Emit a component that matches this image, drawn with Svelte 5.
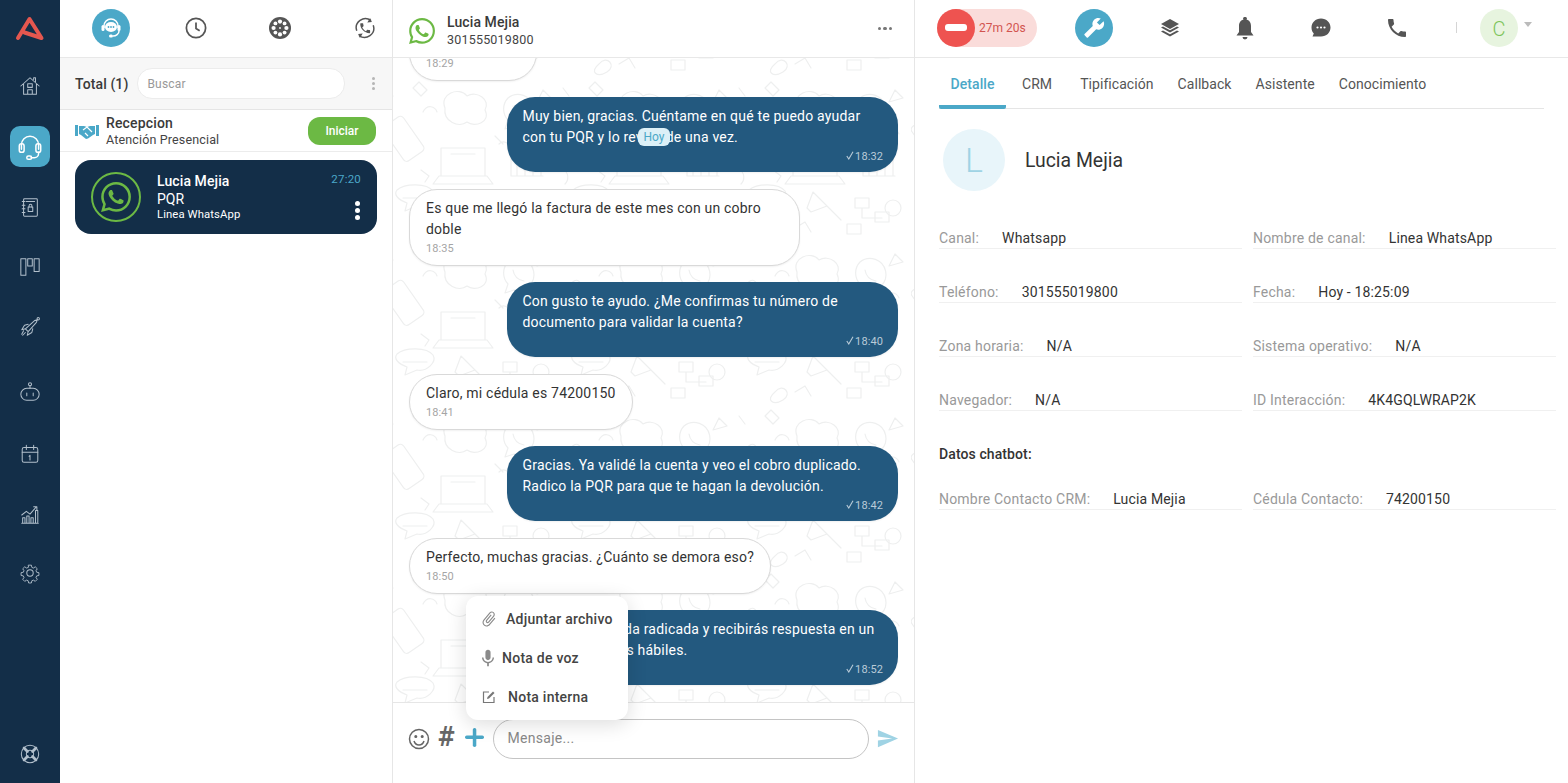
<script>
  const WA = "M17.472 14.382c-.297-.149-1.758-.867-2.03-.967-.273-.099-.471-.148-.67.15-.197.297-.767.966-.94 1.164-.173.199-.347.223-.644.075-.297-.15-1.255-.463-2.39-1.475-.883-.788-1.48-1.761-1.653-2.059-.173-.297-.018-.458.13-.606.134-.133.298-.347.446-.52.149-.174.198-.298.298-.497.099-.198.05-.371-.025-.52-.075-.149-.669-1.612-.916-2.207-.242-.579-.487-.5-.669-.51-.173-.008-.371-.01-.57-.01-.198 0-.52.074-.792.372-.272.297-1.04 1.016-1.04 2.479 0 1.462 1.065 2.875 1.213 3.074.149.198 2.096 3.2 5.077 4.487.709.306 1.262.489 1.694.625.712.227 1.36.195 1.871.118.571-.085 1.758-.719 2.006-1.413.248-.694.248-1.289.173-1.413-.074-.124-.272-.198-.57-.347m-5.421 7.403h-.004a9.87 9.87 0 01-5.031-1.378l-.361-.214-3.741.982.998-3.648-.235-.374a9.86 9.86 0 01-1.51-5.26c.001-5.45 4.436-9.884 9.888-9.884 2.64 0 5.122 1.03 6.988 2.898a9.825 9.825 0 012.893 6.994c-.003 5.45-4.437 9.884-9.885 9.884m8.413-18.297A11.815 11.815 0 0012.05 0C5.495 0 .16 5.335.157 11.892c0 2.096.547 4.142 1.588 5.945L.057 24l6.305-1.654a11.882 11.882 0 005.683 1.448h.005c6.554 0 11.89-5.335 11.893-11.893a11.821 11.821 0 00-3.48-8.413z";
  const messages = [
    { out: false, lines: "Hola, ¿qué tal?", time: "18:29" },
    { out: true, lines: "Muy bien, gracias. Cuéntame en qué te puedo ayudar con tu PQR y lo reviso de una vez.", time: "18:32" },
    { out: false, lines: "Es que me llegó la factura de este mes con un cobro doble", time: "18:35" },
    { out: true, lines: "Con gusto te ayudo. ¿Me confirmas tu número de documento para validar la cuenta?", time: "18:40" },
    { out: false, lines: "Claro, mi cédula es 74200150", time: "18:41" },
    { out: true, lines: "Gracias. Ya validé la cuenta y veo el cobro duplicado. Radico la PQR para que te hagan la devolución.", time: "18:42" },
    { out: false, lines: "Perfecto, muchas gracias. ¿Cuánto se demora eso?", time: "18:50" },
    { out: true, lines: "Tu solicitud queda radicada y recibirás respuesta en un término de 5 días hábiles.", time: "18:52" }
  ];
  const tabs = ["Detalle", "CRM", "Tipificación", "Callback", "Asistente", "Conocimiento"];
  const fields = [
    ["Canal:", "Whatsapp"], ["Nombre de canal:", "Linea WhatsApp"],
    ["Teléfono:", "301555019800"], ["Fecha:", "Hoy - 18:25:09"],
    ["Zona horaria:", "N/A"], ["Sistema operativo:", "N/A"],
    ["Navegador:", "N/A"], ["ID Interacción:", "4K4GQLWRAP2K"]
  ];
  const bot = [["Nombre Contacto CRM:", "Lucia Mejia"], ["Cédula Contacto:", "74200150"]];
</script>

<div class="app">
  <nav class="rail">
    <svg class="logo" width="30" height="26" viewBox="0 0 30 26"><path d="M3 23 14.5 4 26.500 23 9.500 17.500" fill="none" stroke="#e5574f" stroke-width="4" stroke-linejoin="round" stroke-linecap="round"/></svg>
    <div class="rail-items">
      <a class="ri" href="#a"><svg viewBox="0 0 24 24"><path d="M2 12 12 3l10 9M5 10v11h14V10M16 5V3h2v4M9.500 21v-5h5v5M9.500 9.500h5v4h-5z"/></svg></a>
      <a class="ri active" href="#a"><svg viewBox="0 0 28 28" style="width:30px;height:30px"><path d="M6 16v-4a8 8 0 0 1 16 0v4M22 19v1a4 4 0 0 1-4 4h-3"/><rect x="4" y="11" width="4.500" height="8" rx="2"/><rect x="19.500" y="11" width="4.500" height="8" rx="2"/><rect x="11" y="22.500" width="4.500" height="3" rx="1.500"/></svg></a>
      <a class="ri" href="#a"><svg viewBox="0 0 24 24"><rect x="5" y="3" width="15" height="19" rx="1"/><path d="M3.500 6h3M3.500 10h3M3.500 14h3M3.500 18h3M8 6h9"/><rect x="10" y="12" width="5" height="5"/><path d="M11 12v-1.500a1.500 1.500 0 0 1 3 0V12"/></svg></a>
      <a class="ri" href="#a"><svg viewBox="0 0 24 24"><rect x="2" y="3" width="5.500" height="18"/><rect x="9.500" y="3" width="5" height="8"/><rect x="16.500" y="3" width="5.500" height="14"/></svg></a>
      <a class="ri" href="#a"><svg viewBox="0 0 24 24"><path d="M7 14 17 5l3-1-1 3-9 10zM7 14l-4 1 3-5 4-1M10 17l-1 4 5-3 1-4M5 16l-2 4M7 18l-3 3"/><circle cx="21" cy="3" r="1.300"/></svg></a>
      <a class="ri" href="#a"><svg viewBox="0 0 24 24"><rect x="2" y="8" width="20" height="13" rx="6.500"/><path d="M12 8V5M8.500 13v3M15.500 13v3"/><circle cx="12" cy="3.500" r="1.700"/></svg></a>
      <a class="ri" href="#a"><svg viewBox="0 0 24 24"><rect x="3.500" y="5" width="17" height="16" rx="2"/><path d="M3.500 10h17M8 2.500V7M16 2.500V7M11 14.500l1-1v5"/></svg></a>
      <a class="ri" href="#a"><svg viewBox="0 0 24 24"><path d="M3 21h18M4 21v-6h2.500v6M8.500 21v-8H11v8M13 21v-6h2.500v6M18 21V7h2.500v14M3 12l5-4 4 3 7-8M16 3h3.500v3.500"/></svg></a>
      <a class="ri" href="#a"><svg viewBox="0 0 24 24"><circle cx="12" cy="12" r="3.500"/><path d="M10.300 2.500h3.400l.5 2.700 1.900.8 2.300-1.500 2.400 2.400-1.500 2.300.8 1.900 2.700.5v3.400l-2.700.5-.8 1.900 1.500 2.300-2.400 2.400-2.300-1.500-1.900.8-.5 2.700h-3.400l-.5-2.700-1.900-.8-2.300 1.500-2.400-2.400 1.500-2.300-.8-1.900-2.700-.5v-3.400l2.700-.5.8-1.900-1.500-2.300 2.400-2.400 2.300 1.500 1.900-.8z" transform="translate(1.200 1.200) scale(.9)"/></svg></a>
    </div>
    <a class="ri help" href="#a"><svg viewBox="0 0 24 24"><circle cx="12" cy="12" r="9.500"/><circle cx="12" cy="12" r="4"/><path d="m5.500 5.500 3.700 3.700M18.500 5.500l-3.700 3.700M5.500 18.500l3.700-3.700M18.500 18.500l-3.700-3.700" stroke-width="3"/></svg></a>
  </nav>

  <section class="queue">
    <header class="qtabs">
      <span class="circle"><svg width="26" height="26" viewBox="0 0 26 26"><path d="M6 13v-2a7 7 0 0 1 14 0v2" fill="none" stroke="#fff" stroke-width="1.500"/><ellipse cx="13" cy="12" rx="6" ry="5" fill="#fff"/><rect x="3.500" y="10" width="3" height="6" rx="1.500" fill="#fff"/><rect x="19.500" y="10" width="3" height="6" rx="1.500" fill="#fff"/><path d="M21 16c0 3-3 5-6 5" fill="none" stroke="#fff" stroke-width="1.500"/><rect x="11" y="19.500" width="4" height="3" rx="1.500" fill="#fff"/><circle cx="10.500" cy="12" r=".9" fill="#4ba8c8"/><circle cx="13" cy="12" r=".9" fill="#4ba8c8"/><circle cx="15.500" cy="12" r=".9" fill="#4ba8c8"/></svg></span>
      <svg width="22" height="22" viewBox="0 0 24 24" fill="none" stroke="#555" stroke-width="1.900"><circle cx="12" cy="12" r="10.500"/><path d="M12 6v6.500l4 2.500"/></svg>
      <svg width="22" height="22" viewBox="0 0 24 24"><circle cx="12" cy="12" r="12" fill="#555"/><g fill="#fff"><circle cx="12" cy="5" r="2.300"/><circle cx="12" cy="19" r="2.300"/><circle cx="5" cy="12" r="2.300"/><circle cx="19" cy="12" r="2.300"/><circle cx="7" cy="7" r="2.100"/><circle cx="17" cy="7" r="2.100"/><circle cx="7" cy="17" r="2.100"/><circle cx="17" cy="17" r="2.100"/><circle cx="12" cy="12" r="1"/></g></svg>
      <svg width="22" height="22" viewBox="0 0 24 24"><path d="M3 15A10 10 0 0 1 18.500 3.800M21 9A10 10 0 0 1 5.500 20.200" fill="none" stroke="#555" stroke-width="1.600"/><path d="m17.500 1 2 4.500-5 .5zM6.500 23l-2-4.500 5-.5z" fill="#555"/><path transform="translate(5 5) scale(.6)" fill="#555" d="M6.620 10.790c1.440 2.830 3.760 5.140 6.590 6.590l2.200-2.200c.27-.27.67-.36 1.020-.24 1.120.37 2.330.57 3.570.57.55 0 1 .45 1 1V20c0 .55-.45 1-1 1-9.390 0-17-7.610-17-17 0-.55.45-1 1-1h3.500c.55 0 1 .45 1 1 0 1.250.2 2.450.57 3.570.11.35.03.74-.25 1.020l-2.200 2.200z"/></svg>
    </header>
    <div class="search-row">
      <strong>Total (1)</strong>
      <div class="search">Buscar</div>
      <span class="vdots"><i></i><i></i><i></i></span>
    </div>
    <div class="recep">
      <svg width="24" height="16" viewBox="0 0 24 16" fill="#4ba8c8"><path d="M0 2h3v11H0zM21 2h3v11h-3z"/><path d="M4 3h5l3 1 3-1h5v8l-2 1-5 3.500-2 .5-5-4-2-1z"/><path d="m8 7 4-3 5 5M10 10l3 3" fill="none" stroke="#fff" stroke-width="1.200"/></svg>
      <div class="recep-text"><b>Recepcion</b><span>Atención Presencial</span></div>
      <button class="iniciar">Iniciar</button>
    </div>
    <div class="card">
      <span class="ring"><svg width="30" height="30" viewBox="0 0 24 24" fill="#6cb944"><path d={WA}/></svg></span>
      <div class="card-text"><b>Lucia Mejia</b><span class="pqr">PQR</span><small>Linea WhatsApp</small></div>
      <div class="card-side"><span>27:20</span><span class="wdots"><i></i><i></i><i></i></span></div>
    </div>
  </section>

  <section class="chat">
    <header class="chat-head">
      <svg width="26" height="26" viewBox="0 0 24 24" fill="#6cb944"><path d={WA}/></svg>
      <div class="who"><b>Lucia Mejia</b><span>301555019800</span></div>
      <span class="hdots"><i></i><i></i><i></i></span>
    </header>
    <div class="thread">
      <svg class="doodles" width="100%" height="100%" aria-hidden="true">
        <defs>
          <pattern id="wp" width="176" height="164" patternUnits="userSpaceOnUse" x="-10" y="20">
            <g fill="none" stroke="#eeefef" stroke-width="1.200" stroke-linecap="round" stroke-linejoin="round">
              <rect x="8" y="40" width="24" height="42" rx="4" transform="rotate(-35 20 60)"/>
              <path d="M62 30c-6-14 14-22 22-12 10-6 24 4 18 14 6 12-10 18-18 12-8 6-24 0-22-14z"/>
              <path d="M58 70h44v28H58zM50 106h60l-6-8H56zM68 76h24"/>
              <path d="M125 20a16 16 0 1 1 6 28l-9 3 3-9a16 16 0 0 1 0-22zM130 28c1 6 5 10 11 11"/>
              <path d="M128 72v26h32M134 98V86M142 98V78M150 98V84M158 98V74"/>
              <path d="M14 112c8-7 30-7 36 1 4 7-6 17-16 15l-12 5 2-8c-8-3-14-8-10-13zM20 120h24"/>
              <path d="M72 130l6-16 14 14-16 6zM92 128l14 14M40 150c8-10 18 2 8 8s-18 0-8-8M120 120h14v10h-14zM140 134h14v10h-14zM112 146h14v10h-14zM127 130v10h20"/>
              <circle cx="158" cy="130" r="8"/><path d="M30 10l6-6 8 8-6 6zM4 10l6 8M160 12l8 8-14 4z"/>
              <path d="M40 34c4-8 12-6 14 0M38 92l8 6-4 6M112 58l8 8M116 66c4-4 10-2 10 4M4 92c6 2 6 10 2 14M60 150l10-6 6 10M148 54c4-6 14-4 16 2"/>
            </g>
          </pattern>
        </defs>
        <rect width="100%" height="100%" fill="url(#wp)"/>
      </svg>
      <div class="msgs">
        {#each messages as m}
          <div class="bubble" class:out={m.out}>
            <p>{m.lines}</p>
            <time>{#if m.out}<svg width="8" height="9" viewBox="0 0 8 9"><path d="m.8 5 2 3L7 .8" fill="none" stroke="#b9cbd8" stroke-width="1.100"/></svg>{/if}{m.time}</time>
          </div>
        {/each}
      </div>
      <span class="hoy">Hoy</span>
    </div>
    <footer class="composer">
      <svg class="c-smile" width="22" height="22" viewBox="0 0 22 22" fill="none" stroke="#666" stroke-width="1.500"><circle cx="11" cy="11" r="9.500"/><path d="M6 13c1 3 3 4 5 4s4-1 5-4"/><circle cx="7.800" cy="8.500" r=".8" fill="#666"/><circle cx="14.200" cy="8.500" r=".8" fill="#666"/></svg>
      <span class="hash">#</span>
      <svg class="c-plus" width="19" height="19" viewBox="0 0 19 19" fill="#4ba8c8"><rect y="7.500" width="19" height="3.500" rx="1.700"/><rect x="7.800" width="3.500" height="19" rx="1.700"/></svg>
      <div class="input">Mensaje...</div>
      <svg class="send" width="23" height="23" viewBox="0 0 24 24" fill="#9fd3e4"><path d="M2.010 21 23 12 2.010 3 2 10l15 2-15 2z"/></svg>
    </footer>
    <div class="menu">
      <div class="mi"><svg width="18" height="18" viewBox="0 0 24 24" fill="#8a8a8a" transform="rotate(40)"><path d="M16.500 6v11.500c0 2.210-1.790 4-4 4s-4-1.790-4-4V5c0-1.380 1.120-2.500 2.500-2.500s2.500 1.120 2.500 2.500v10.500c0 .55-.45 1-1 1s-1-.45-1-1V6H10v9.500c0 1.380 1.120 2.500 2.500 2.500s2.500-1.120 2.500-2.500V5c0-2.210-1.790-4-4-4S7 2.790 7 5v12.500c0 3.040 2.460 5.500 5.500 5.500s5.500-2.460 5.500-5.500V6h-1.500z"/></svg>Adjuntar archivo</div>
      <div class="mi mic"><svg width="16" height="18" viewBox="4 1 16 21" fill="#8a8a8a"><path d="M12 14c1.660 0 3-1.340 3-3V5c0-1.660-1.340-3-3-3S9 3.340 9 5v6c0 1.660 1.340 3 3 3zm5.300-3c0 3-2.540 5.100-5.300 5.100S6.700 14 6.700 11H5c0 3.410 2.720 6.230 6 6.720V21h2v-3.280c3.280-.48 6-3.300 6-6.720h-1.700z"/></svg>Nota de voz</div>
      <div class="mi note"><svg width="14" height="14" viewBox="0 0 14 14" fill="none" stroke="#777" stroke-width="1.200"><path d="M7 2H1.500v10.500H12V7"/><path d="M5 9l.5-2L11 1.500 12.500 3 7 8.500z" fill="#777" stroke="none"/></svg>Nota interna</div>
    </div>
  </section>

  <section class="detail">
    <header class="top">
      <div class="status"><span class="stop"><i></i></span><span class="timer">27m 20s</span></div>
      <span class="tool"><svg width="24" height="24" viewBox="0 0 24 24" fill="#fff"><g transform="matrix(-.9 0 0 .9 23 1)"><path d="M22.700 19l-9.100-9.100c.9-2.300.4-5-1.500-6.900-2-2-5-2.400-7.400-1.300L9 6 6 9 1.600 4.700C.4 7.100.9 10.100 2.900 12.100c1.900 1.900 4.600 2.400 6.900 1.500l9.100 9.100c.4.4 1 .4 1.400 0l2.300-2.300c.5-.4.5-1.100.1-1.400z"/></g></svg></span>
      <svg class="gap1" width="20" height="20" viewBox="0 0 20 20" fill="#555"><path d="m10 1 9 5-9 5-9-5z"/><path d="m1 9.500 2-1 7 3.800 7-3.800 2 1-9 5z"/><path d="m1 13.500 2-1 7 3.800 7-3.800 2 1-9 5z"/></svg>
      <svg class="gap2" width="18" height="24" viewBox="0 0 18 24" fill="#555"><path d="M9 1a1.500 1.500 0 0 1 1.500 2.500C14 4.500 15 7.500 15 10v6l2.500 3.500H.5L3 16v-6c0-2.500 1-5.500 4.500-6.500A1.500 1.500 0 0 1 9 1zM6.500 21h5a2.500 2.500 0 0 1-5 0z"/></svg>
      <svg class="gap3" width="20" height="20" viewBox="0 0 20 20"><path d="M10 .5c5.500 0 9.500 4 9.500 9s-4 9-9.500 9H1.500l1.300-3C1.300 14 .5 12 .5 9.500c0-5 4-9 9.500-9z" fill="#555"/><circle cx="6.500" cy="9.500" r="1.100" fill="#fff"/><circle cx="10" cy="9.500" r="1.100" fill="#fff"/><circle cx="13.500" cy="9.500" r="1.100" fill="#fff"/></svg>
      <svg class="gap4" width="18" height="18" viewBox="3 3 18 18" fill="#555"><path d="M6.620 10.790c1.440 2.830 3.760 5.140 6.590 6.590l2.200-2.200c.27-.27.67-.36 1.020-.24 1.120.37 2.330.57 3.570.57.55 0 1 .45 1 1V20c0 .55-.45 1-1 1-9.390 0-17-7.610-17-17 0-.55.45-1 1-1h3.500c.55 0 1 .45 1 1 0 1.250.2 2.450.57 3.570.11.35.03.74-.25 1.020l-2.200 2.200z"/></svg>
      <span class="sep"></span>
      <span class="me">C</span>
      <span class="caret"></span>
    </header>
    <div class="body">
      <div class="tabs">
        {#each tabs as t, i}<a href="#a" class:on={i === 0}>{t}</a>{/each}
      </div>
      <div class="contact"><span class="big">L</span><h2>Lucia Mejia</h2></div>
      <div class="grid">
        {#each fields as f}<div class="field"><span>{f[0]}</span><b>{f[1]}</b></div>{/each}
      </div>
      <h3>Datos chatbot:</h3>
      <div class="grid">
        {#each bot as f}<div class="field"><span>{f[0]}</span><b>{f[1]}</b></div>{/each}
      </div>
    </div>
  </section>
</div>

<style>
  :global(body) { margin: 0; background: #fff; }
  * { box-sizing: border-box; }
  .app { display: grid; grid-template-columns: 60px 333px 522px 1fr; height: 783px; overflow: hidden; font-family: Roboto, "Liberation Sans", sans-serif; color: #333; font-size: 14px; }

  .rail { background: #132e48; display: flex; flex-direction: column; align-items: center; }
  .logo { margin-top: 15px; flex: none; }
  .rail-items { margin-top: 25px; display: flex; flex-direction: column; align-items: center; gap: 20px; flex: 1; }
  .ri { width: 40px; height: 40px; display: flex; align-items: center; justify-content: center; border-radius: 10px; flex: none; }
  .ri:nth-child(6) { margin-top: 5px; }
  .ri:nth-child(7) { margin-top: 2px; }
  .ri:nth-child(8) { margin-top: 1px; }
  .ri:nth-child(9) { margin-top: -2px; }
  .ri svg { width: 22px; height: 22px; fill: none; stroke: #b3c0cc; stroke-width: 1.100; stroke-linecap: round; stroke-linejoin: round; }
  .ri.active { background: #4ba8c8; height: 41px; }
  .ri.active svg { stroke: #fff; stroke-width: 1.400; }
  .help { margin-bottom: 9px; }

  .queue { border-right: 1px solid #e6e6e6; display: flex; flex-direction: column; }
  .qtabs { height: 58px; border-bottom: 1px solid #e8e8e8; display: grid; grid-template-columns: repeat(4, 84.500px); align-items: center; justify-items: center; padding: 0 0 2px 9px; flex: none; }
  .circle { width: 38px; height: 38px; border-radius: 50%; background: #4ba8c8; display: flex; align-items: center; justify-content: center; }
  .search-row { height: 52px; background: #f7f7f7; border-bottom: 1px solid #e5e5e5; display: flex; align-items: center; padding: 0 15px; flex: none; }
  .search-row strong { font-weight: 500; font-size: 14px; letter-spacing: .1px; color: #3a3a3a; }
  .search { margin-left: 9px; width: 208px; height: 31px; border-radius: 15px; background: #fff; border: 1px solid #ececec; color: #999; font-size: 12px; line-height: 31px; padding-left: 9px; letter-spacing: .2px; }
  .vdots { display: flex; flex-direction: column; gap: 2px; margin-left: 27px; }
  .vdots i { width: 3px; height: 3px; background: #b5b5b5; border-radius: 50%; }
  .recep { height: 42px; border-bottom: 1px solid #ececec; display: flex; align-items: center; padding: 0 16px 0 15px; flex: none; }
  .recep-text { margin-left: 7px; padding-top: 2px; display: flex; flex-direction: column; flex: 1; }
  .recep-text b { font-weight: 500; font-size: 14px; line-height: 16px; letter-spacing: .15px; color: #3a3a3a; }
  .recep-text span { font-size: 12.500px; line-height: 17px; letter-spacing: .15px; color: #444; }
  .iniciar { width: 68px; height: 28px; border: 0; border-radius: 12px; background: #6cb944; color: #fff; font: 500 12px Roboto, sans-serif; }
  .card { margin: 8px 15px 0; height: 74px; border-radius: 16px; background: #132e48; color: #fff; display: flex; align-items: center; padding: 0 16px; flex: none; }
  .ring { width: 50px; height: 50px; border-radius: 50%; border: 2.500px solid #6cb944; display: flex; align-items: center; justify-content: center; flex: none; }
  .card-text { margin-left: 16px; padding-bottom: 2px; display: flex; flex-direction: column; flex: 1; }
  .card-text b { font-weight: 500; font-size: 14px; line-height: 18px; letter-spacing: .1px; }
  .pqr { font-size: 14px; line-height: 18px; }
  .card-text small { font-size: 11.300px; line-height: 13px; letter-spacing: .1px; }
  .card-side { align-self: stretch; display: flex; flex-direction: column; align-items: flex-end; justify-content: space-between; padding: 12px 0 14px; }
  .card-side span:first-child { color: #4ba8c8; font-size: 11.500px; letter-spacing: .2px; }
  .wdots { display: flex; flex-direction: column; gap: 2px; margin-right: 1px; }
  .wdots i { width: 5px; height: 5px; background: #fff; border-radius: 50%; }

  .chat { position: relative; border-right: 1px solid #e6e6e6; display: flex; flex-direction: column; min-height: 0; }
  .chat-head { height: 58px; border-bottom: 1px solid #e8e8e8; display: flex; align-items: center; padding: 4px 22px 0 16px; flex: none; }
  .who { margin-left: 12px; display: flex; flex-direction: column; flex: 1; }
  .who b { font-weight: 500; font-size: 14px; line-height: 17px; letter-spacing: .1px; color: #3a3a3a; }
  .who span { font-size: 12.500px; line-height: 17px; letter-spacing: .2px; color: #444; }
  .hdots { display: flex; gap: 2px; margin-top: -4px; }
  .hdots i { width: 3.500px; height: 3.500px; background: #777; border-radius: 50%; }
  .thread { position: relative; flex: 1; min-height: 0; overflow: hidden; }
  .doodles { position: absolute; inset: 0; }
  .msgs { position: relative; height: 100%; display: flex; flex-direction: column; justify-content: flex-end; gap: 16.500px; padding: 0 16px 17px; }
  .bubble { align-self: flex-start; max-width: 391px; flex: none; background: #fff; border: 1px solid #d9d9d9; border-radius: 28px; padding: 8.500px 16px; box-shadow: 0 1px 2px rgba(0,0,0,.06); }
  .bubble p { margin: 0; font-size: 14px; line-height: 21px; letter-spacing: .2px; color: #333; }
  .bubble time { display: block; font-size: 11px; line-height: 14px; margin-top: 2px; color: #a5a5a5; letter-spacing: .1px; }
  .bubble.out { align-self: flex-end; width: 391px; background: #23597f; border: 0; padding: 9px 15px 8px 15.500px; }
  .bubble.out p { color: #fff; }
  .bubble.out time { color: #b9cbd8; text-align: right; margin-top: 2px; }
  .bubble.out time svg { margin-right: 1px; }
  .hoy { position: absolute; left: 245px; top: 70px; width: 32px; height: 18px; border-radius: 6px; background: #dcf0f7; color: #4ba8c8; font-size: 12px; line-height: 18px; text-align: center; }
  .composer { height: 81px; border-top: 1px solid #e6e6e6; background: #fff; display: flex; align-items: flex-start; padding: 16px 0 0 15px; flex: none; }
  .composer > svg, .composer > span, .composer > div { flex: none; }
  .c-smile, .c-plus { margin-top: 9px; }
  .hash { font: 700 26px/1 "DejaVu Sans", sans-serif; color: #666; width: 18px; margin: 5px 11px 0 6px; transform: scaleX(.85); text-align: center; }
  .input { margin-left: 8.500px; width: 376px; height: 40px; border: 1px solid #c4c4c4; border-radius: 20px; color: #888; font-size: 14px; line-height: 37px; padding-left: 14px; letter-spacing: .3px; }
  .send { margin: 8px 0 0 7.500px; }
  .menu { position: absolute; left: 73px; top: 596px; width: 162px; height: 124px; background: #fff; border-radius: 12px; box-shadow: 0 4px 20px rgba(0,0,0,.14); padding-left: 14px; font-weight: 500; letter-spacing: .25px; color: #444; display: flex; flex-direction: column; }
  .mi { height: 39px; display: flex; align-items: center; gap: 8px; padding-top: 6px; font-size: 14px; }
  .mic { gap: 6px; }
  .note { gap: 12px; padding-left: 2px; }

  .detail { display: flex; flex-direction: column; min-width: 0; }
  .top { height: 58px; border-bottom: 1px solid #e8e8e8; display: flex; align-items: center; padding: 0 0 2px 22px; flex: none; }
  .status { width: 100px; height: 38px; border-radius: 19px; background: #fadcda; display: flex; align-items: center; }
  .stop { width: 38px; height: 38px; background: #ee5350; border-radius: 50%; display: flex; align-items: center; justify-content: center; }
  .stop i { width: 22px; height: 7px; border-radius: 3px; background: #fff; }
  .timer { margin-left: 4px; font-size: 12px; color: #d2544f; }
  .tool { margin-left: 38px; width: 38px; height: 38px; border-radius: 50%; background: #4ba8c8; display: flex; align-items: center; justify-content: center; }
  .gap1 { margin-left: 47px; }
  .gap2 { margin-left: 56px; }
  .gap3 { margin-left: 57px; }
  .gap4 { margin-left: 57px; }
  .sep { margin-left: 50px; width: 1px; height: 11px; background: #d5d5d5; }
  .me { margin-left: 23px; width: 38px; height: 38px; border-radius: 50%; background: #e7f4df; color: #7cc45a; font-size: 20px; line-height: 40px; text-align: center; font-weight: 300; }
  .caret { margin: -6px 0 0 6px; border: 4px solid transparent; border-top: 5px solid #bbb; border-bottom: 0; }
  .body { padding: 0 12px 0 24px; }
  .tabs { display: flex; gap: 24px; height: 51px; border-bottom: 1px solid #e5e5e5; margin-right: 12px; }
  .tabs a { text-decoration: none; color: #555; font-size: 14px; letter-spacing: .06px; line-height: 53px; height: 51px; }
  .tabs a.on { color: #4ba8c8; font-weight: 500; border-bottom: 4px solid #4ba8c8; border-radius: 2px; width: 67px; margin-right: -8px; text-align: center; }
  .tabs a:nth-child(2) { padding-right: 4px; }
  .contact { display: flex; align-items: center; margin: 20px 0 0 4px; height: 62px; }
  .big { width: 62px; height: 62px; border-radius: 50%; background: #e8f5fa; color: #9fd3e4; font-size: 34px; font-weight: 300; text-align: center; line-height: 62px; }
  .contact h2 { margin: 0 0 0 20px; font-size: 19.400px; font-weight: 400; color: #333; }
  .grid { display: grid; grid-template-columns: 303px 303px; column-gap: 11px; row-gap: 33px; }
  .contact + .grid { margin-top: 37px; }
  .field { height: 21px; border-bottom: 1px solid #f0f0f0; display: flex; gap: 23px; align-items: flex-start; line-height: 20px; }
  .field span { color: #999; letter-spacing: .2px; }
  .field b { font-weight: 400; color: #333; letter-spacing: .15px; }
  h3 { margin: 33px 0 0; font-size: 14px; line-height: 20px; font-weight: 500; color: #333; letter-spacing: .1px; }
  h3 + .grid { margin-top: 25px; }
</style>
